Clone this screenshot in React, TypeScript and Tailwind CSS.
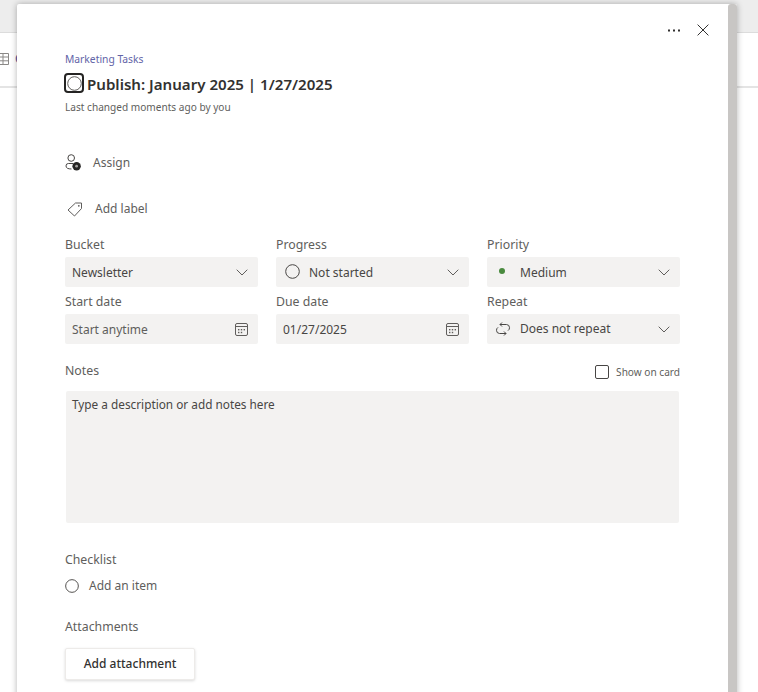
import React from "react";

function Chevron() {
  return (
    <svg width="12" height="7" viewBox="0 0 12 7" fill="none" className="shrink-0">
      <path d="M0.7 0.7 L6 6 L11.3 0.7" stroke="#605e5c" strokeWidth="1" />
    </svg>
  );
}

function Calendar() {
  return (
    <svg width="13" height="13" viewBox="0 0 13 13" fill="none" className="shrink-0">
      <rect x="0.5" y="0.5" width="12" height="12" rx="1.5" stroke="#605e5c" />
      <path d="M1 3.5 H12" stroke="#605e5c" />
      <rect x="3" y="6" width="1.4" height="1.4" fill="#605e5c" />
      <rect x="5.8" y="6" width="1.4" height="1.4" fill="#605e5c" />
      <rect x="8.6" y="6" width="1.4" height="1.4" fill="#605e5c" />
      <rect x="3" y="8.8" width="1.4" height="1.4" fill="#605e5c" />
      <rect x="5.8" y="8.8" width="1.4" height="1.4" fill="#605e5c" />
    </svg>
  );
}

function Circle({ size = 15, color = "#484644" }: { size?: number; color?: string }) {
  return (
    <svg width={size} height={size} viewBox="0 0 15 15" fill="none" className="shrink-0">
      <circle cx="7.5" cy="7.5" r="6.8" stroke={color} strokeWidth="1" />
    </svg>
  );
}

function Field({ label, children }: { label: string; children: React.ReactNode }) {
  return (
    <div className="flex flex-col">
      <div className="h-[27px] pt-[3px] text-[12.3px] leading-[24px] text-[#605e5c]">{label}</div>
      {children}
    </div>
  );
}

function Box({ children }: { children: React.ReactNode }) {
  return <div className="flex h-[30px] items-center rounded-[2px] bg-[#f3f2f1] pt-[2px] text-[12px] text-[#484644]">{children}</div>;
}

export default function App() {
  return (
    <div className="relative h-[692px] w-[758px] overflow-hidden bg-white font-['Noto_Sans','Open_Sans',sans-serif]">
      <div className="h-[33px] border-b border-[#dcdcdc] bg-[#ededed]" />
      <div className="flex h-[55px] items-center border-b-2 border-[#e4e4e4] bg-white pb-[2px]">
        <svg width="9" height="12" viewBox="0 0 9 12" fill="none">
          <path d="M0 0.5 H8.5 V11.5 H0 M0 4 H8.5 M0 7.8 H8.5 M3 0.5 V11.5" stroke="#8a8886" />
        </svg>
        <span className="ml-[6px] text-[12px] font-semibold leading-none text-[#6264a7]">C</span>
      </div>

      <div
        role="dialog"
        className="absolute left-[17px] top-[4px] flex h-[700px] w-[720px] rounded-t-[2px] bg-white shadow-[0_0_6px_rgba(0,0,0,0.3)]"
      >
        <div className="relative flex-1 px-[48px]">
          <div className="absolute right-[19px] top-[20px] flex items-center gap-[16px]">
            <svg width="13" height="3" viewBox="0 0 13 3" fill="#323130">
              <rect x="0" y="0.5" width="2" height="2" />
              <rect x="5" y="0.5" width="2" height="2" />
              <rect x="10" y="0.5" width="2" height="2" />
            </svg>
            <svg width="12" height="12" viewBox="0 0 12 12" fill="none">
              <path d="M0.6 0.6 L11.4 11.4 M11.4 0.6 L0.6 11.4" stroke="#323130" strokeWidth="1" />
            </svg>
          </div>

          <div className="pt-[47px] text-[10.3px] leading-[16px] text-[#6264a7]">Marketing Tasks</div>
          <div className="mt-[6px] flex h-[20px] items-center">
            <div className="-ml-[1px] flex h-[20px] w-[20px] items-center justify-center rounded-[4px] border-2 border-[#252423]">
              <Circle size={15} color="#605e5c" />
            </div>
            <div className="ml-[3px] whitespace-nowrap pt-[2px] text-[15.1px] font-semibold leading-[20px] text-[#323130]">
              Publish: January 2025 | 1/27/2025
            </div>
          </div>
          <div className="mt-[6px] text-[10.1px] leading-[16px] text-[#605e5c]">Last changed moments ago by you</div>

          <div className="mt-[38px] flex h-[20px] items-center text-[12px] text-[#605e5c]">
            <svg width="16" height="17" viewBox="0 0 16 17" fill="none" className="mb-[2px] shrink-0">
              <circle cx="6.2" cy="4" r="3.3" stroke="#484644" />
              <path d="M8 9.5 H3.4 A2.4 2.4 0 0 0 1 11.9 C1 14.1 3 15 6.5 15" stroke="#484644" />
              <circle cx="11.6" cy="12.2" r="4.2" fill="#252423" />
              <circle cx="11.6" cy="12.2" r="1.4" fill="#a19f9d" />
            </svg>
            <span className="ml-[12px]">Assign</span>
          </div>
          <div className="mt-[26px] flex h-[20px] items-center text-[12px] text-[#605e5c]">
            <svg width="16" height="15" viewBox="0 0 16 15" fill="none" className="ml-[2px] shrink-0">
              <path d="M1 8 L8.5 1 H14.5 V6.5 L7.5 14 Z" stroke="#605e5c" strokeLinejoin="round" />
              <circle cx="11.8" cy="3.8" r="0.9" fill="#605e5c" />
            </svg>
            <span className="ml-[12px]">Add label</span>
          </div>

          <div className="mt-[11px] grid grid-cols-[193px_193px_193px] gap-x-[18px]">
            <Field label="Bucket">
              <Box>
                <span className="ml-[7px] flex-1">Newsletter</span>
                <span className="mb-[2px] mr-[10px]"><Chevron /></span>
              </Box>
            </Field>
            <Field label="Progress">
              <Box>
                <span className="mb-[4px] ml-[9px]"><Circle /></span>
                <span className="ml-[9px] flex-1">Not started</span>
                <span className="mb-[2px] mr-[10px]"><Chevron /></span>
              </Box>
            </Field>
            <Field label="Priority">
              <Box>
                <span className="mb-[4px] ml-[12px] h-[6px] w-[6px] rounded-full bg-[#498a3e]" />
                <span className="ml-[15px] flex-1">Medium</span>
                <span className="mb-[2px] mr-[10px]"><Chevron /></span>
              </Box>
            </Field>
            <Field label="Start date">
              <Box>
                <span className="ml-[7px] flex-1 text-[#605e5c]">Start anytime</span>
                <span className="mb-[2px] mr-[10px]"><Calendar /></span>
              </Box>
            </Field>
            <Field label="Due date">
              <Box>
                <span className="ml-[7px] flex-1">01/27/2025</span>
                <span className="mb-[2px] mr-[10px]"><Calendar /></span>
              </Box>
            </Field>
            <Field label="Repeat">
              <Box>
                <svg width="16" height="14" viewBox="0 0 16 14" fill="none" className="mb-[3px] ml-[8px] shrink-0">
                  <path d="M5 2.5 H11.5 A3.2 3.2 0 0 1 14.5 5.7 A3.4 3.4 0 0 1 13 8.6 M11 11.5 H4.5 A3.2 3.2 0 0 1 1.5 8.3 A3.4 3.4 0 0 1 3 5.4" stroke="#484644" />
                  <path d="M7 0.5 L5 2.5 L7 4.5 M9 9.5 L11 11.5 L9 13.5" stroke="#484644" />
                </svg>
                <span className="mb-[2px] ml-[9px] flex-1">Does not repeat</span>
                <span className="mb-[2px] mr-[10px]"><Chevron /></span>
              </Box>
            </Field>
          </div>

          <div className="mt-[15px] flex h-[24px] w-[615px] items-center justify-between">
            <span className="text-[12.3px] text-[#605e5c]">Notes</span>
            <span className="flex items-center gap-[7px] pt-[3px] text-[10.1px] text-[#605e5c]">
              <span className="h-[14px] w-[14px] rounded-[2px] border border-[#484644]" />
              Show on card
            </span>
          </div>
          <div className="ml-[1px] mt-[8px] h-[132px] w-[613px] rounded-[2px] bg-[#f3f2f1] px-[6px] pt-[5px] text-[11.8px] leading-[17px] text-[#484644]">
            Type a description or add notes here
          </div>

          <div className="mt-[27px] text-[12.3px] leading-[20px] text-[#605e5c]">Checklist</div>
          <div className="mt-[6px] flex h-[20px] items-center text-[12px] text-[#605e5c]">
            <Circle size={14} />
            <span className="ml-[10px]">Add an item</span>
          </div>
          <div className="mt-[21px] text-[12.3px] leading-[20px] text-[#605e5c]">Attachments</div>
          <div className="mt-[11px] flex h-[32px] w-[130px] items-center justify-center rounded-[2px] border border-[#edebe9] bg-white text-[12px] font-medium text-[#323130] shadow-[0_1px_3px_rgba(0,0,0,0.15)]">
            Add attachment
          </div>
        </div>
        <div className="h-full w-[9px] shrink-0 rounded-t-[3px] bg-[#c8c6c4]" />
      </div>
    </div>
  );
}
